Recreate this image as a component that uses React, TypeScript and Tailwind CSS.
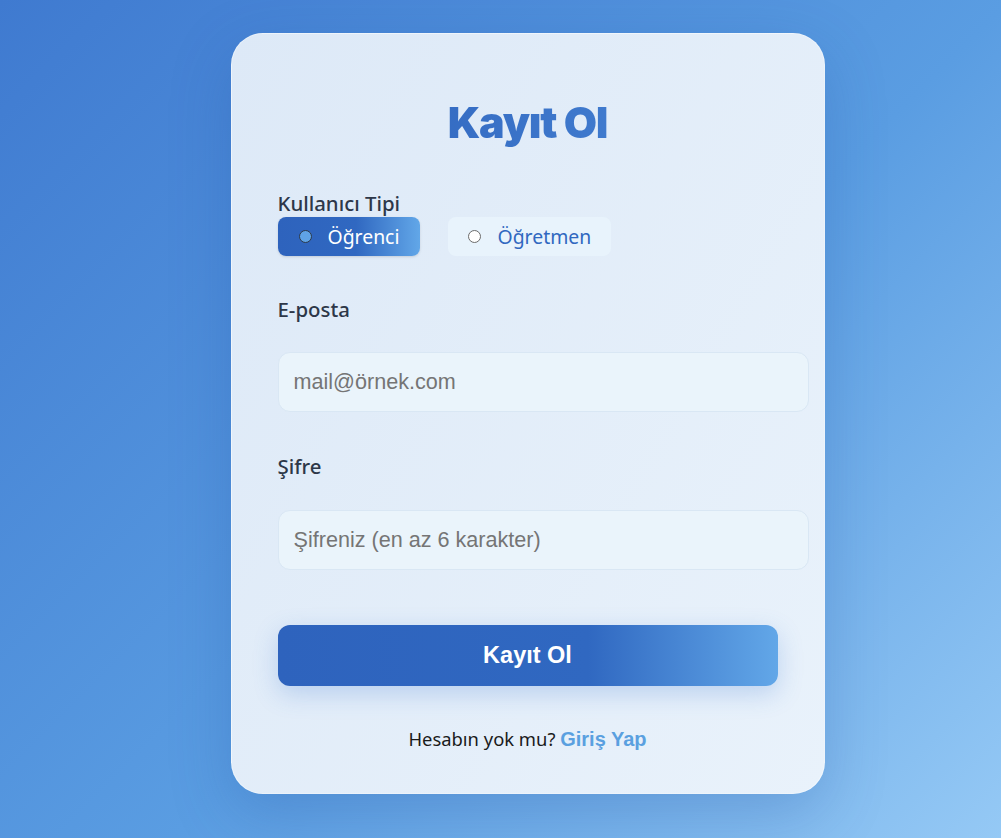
import { useState } from "react";

export default function App() {
  const [role, setRole] = useState<"ogrenci" | "ogretmen">("ogrenci");

  return (
    <main className="min-h-screen w-full bg-[linear-gradient(135deg,#3f7ad0_0%,#5a9de2_55%,#95c9f5_100%)] flex justify-center pl-[54px] pt-[33px] pb-[44px] font-['Noto_Sans',sans-serif]">
      <div className="w-[594px] h-[761px] rounded-[32px] border border-white/40 bg-[linear-gradient(120deg,#dde9f7,#e9f2fb)] shadow-[0_20px_60px_rgba(30,80,160,0.25)] px-[46px] pt-[60px]">
        {/* Title */}
        <h1 className="text-center text-[43px] leading-[56px] font-black tracking-[-1.2px] font-['Inter',sans-serif] bg-[linear-gradient(90deg,#2b5fb9,#4a88d8)] bg-clip-text text-transparent">
          Kayıt Ol
        </h1>

        {/* User type */}
        <div className="mt-[41px]">
          <div className="text-[20.4px] leading-[24px] font-medium text-[#2d3748]">Kullanıcı Tipi</div>
          <div className="flex gap-[28px] mt-[2px]">
            <button
              onClick={() => setRole("ogrenci")}
              className={
                role === "ogrenci"
                  ? "flex items-center h-[39px] w-[142px] pl-[21px] rounded-[8px] bg-[linear-gradient(90deg,#2e63bd_0%,#3068c1_55%,#62a7e8_100%)] text-white text-[19.4px] shadow-sm"
                  : "flex items-center h-[39px] w-[142px] pl-[21px] rounded-[8px] bg-[#e8f3fc] text-[#3068c0] text-[19.4px]"
              }
            >
              <span
                className={
                  role === "ogrenci"
                    ? "w-[13px] h-[13px] rounded-full border-[1.5px] border-[#2d3a4a] bg-[#5fa3e6]"
                    : "w-[13px] h-[13px] rounded-full border border-[#6b6b6b] bg-white"
                }
              />
              <span className="ml-[16px]">Öğrenci</span>
            </button>
            <button
              onClick={() => setRole("ogretmen")}
              className={
                role === "ogretmen"
                  ? "flex items-center h-[39px] w-[163px] pl-[20px] rounded-[8px] bg-[linear-gradient(90deg,#2e63bd_0%,#3068c1_55%,#62a7e8_100%)] text-white text-[19.4px]"
                  : "flex items-center h-[39px] w-[163px] pl-[20px] rounded-[8px] bg-[#e8f3fc] text-[#3068c0] text-[19.4px]"
              }
            >
              <span
                className={
                  role === "ogretmen"
                    ? "w-[13px] h-[13px] rounded-full border-[1.5px] border-[#2d3a4a] bg-[#5fa3e6]"
                    : "w-[13px] h-[13px] rounded-full border border-[#6b6b6b] bg-white"
                }
              />
              <span className="ml-[17px]">Öğretmen</span>
            </button>
          </div>
        </div>

        {/* Email */}
        <div className="mt-[41px]">
          <label className="block text-[20.4px] leading-[24px] font-medium text-[#2d3748]">E-posta</label>
          <input
            type="email"
            placeholder="mail@örnek.com"
            className="mt-[31px] w-[531px] h-[60px] rounded-[12px] border border-[#d9e7f4] bg-[#eaf4fb] px-[15px] text-[21.6px] font-['Liberation_Sans',sans-serif] text-[#333] placeholder:text-[#757575] outline-none"
          />
        </div>

        {/* Password */}
        <div className="mt-[42px]">
          <label className="block text-[20.4px] leading-[24px] font-medium text-[#2d3748]">Şifre</label>
          <input
            type="password"
            placeholder="Şifreniz (en az 6 karakter)"
            className="mt-[32px] w-[531px] h-[60px] rounded-[12px] border border-[#d9e7f4] bg-[#eaf4fb] px-[15px] text-[21.6px] font-['Liberation_Sans',sans-serif] text-[#333] placeholder:text-[#757575] outline-none"
          />
        </div>

        {/* Submit */}
        <button className="mt-[55px] w-[500px] h-[61px] rounded-[12px] bg-[linear-gradient(90deg,#2e63bd_0%,#3068c1_62%,#62a7e8_100%)] text-white text-[23.5px] font-bold font-['Liberation_Sans',sans-serif] shadow-[0_8px_24px_rgba(60,120,210,0.25)]">
          Kayıt Ol
        </button>

        <p className="mt-[38px] text-center text-[18.4px] text-[#1a1a1a]">
          Hesabın yok mu?{" "}
          <a href="#" className="font-bold text-[20px] text-[#5aa0e0] font-['Liberation_Sans',sans-serif]">
            Giriş Yap
          </a>
        </p>
      </div>
    </main>
  );
}
